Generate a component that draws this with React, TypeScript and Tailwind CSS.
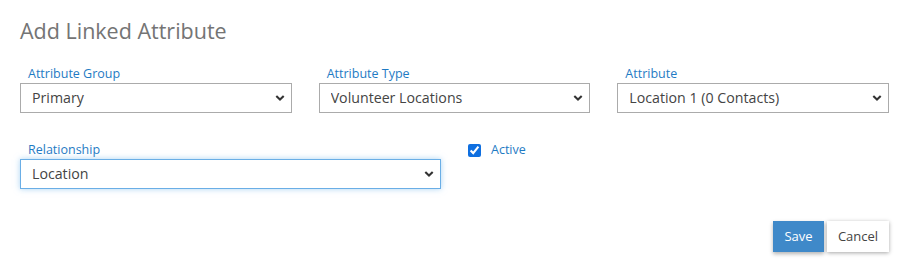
import { FC } from "react";

const font = { fontFamily: '"Open Sans", "Liberation Sans", sans-serif' };

const Chevron: FC = () => (
  <svg
    className="pointer-events-none absolute right-[7px] top-1/2 -translate-y-1/2"
    width="10"
    height="7"
    viewBox="0 0 10 7"
  >
    <path d="M1.3 1.6 L5 5 L8.7 1.6" fill="none" stroke="#333" strokeWidth="2.1" />
  </svg>
);

type FieldProps = {
  label: string;
  value: string;
  focused?: boolean;
};

const SelectField: FC<FieldProps> = ({ label, value, focused }) => (
  <div className="flex flex-col">
    <label className="mb-px pl-2 text-[12.5px] leading-4 text-[#1f7bc4]">
      {label}
    </label>
    <div className="relative">
      <select
        defaultValue={value}
        className={
          focused
            ? "h-[30px] w-full appearance-none border border-[#6aaee6] bg-white pl-[11px] text-[14.2px] text-[#444] shadow-[0_0_6px_rgba(102,175,233,0.55)] outline-none"
            : "h-[30px] w-full appearance-none border border-[#ababab] bg-white pl-[11px] text-[14.2px] text-[#444] outline-none"
        }
      >
        <option>{value}</option>
      </select>
      <Chevron />
    </div>
  </div>
);

export default function App() {
  return (
    <div
      className="h-[266px] w-[908px] bg-white pl-5 pr-[19px] pt-[17px]"
      style={font}
    >
      <h1 className="text-[21.5px] leading-7 text-[#747474]">
        Add Linked Attribute
      </h1>

      <div className="mt-[21px] grid grid-cols-3 gap-x-[27px]">
        <SelectField label="Attribute Group" value="Primary" />
        <SelectField label="Attribute Type" value="Volunteer Locations" />
        <SelectField label="Attribute" value="Location 1 (0 Contacts)" />
      </div>

      <div className="mt-[29px] grid grid-cols-2 gap-x-[27px]">
        <SelectField label="Relationship" value="Location" focused />
        <div className="flex h-4 items-center">
          <input
            type="checkbox"
            defaultChecked
            className="m-0 h-[13px] w-[13px] accent-[#0f6fe0]"
          />
          <span className="ml-[10px] text-[12.5px] leading-4 text-[#1f7bc4]">
            Active
          </span>
        </div>
      </div>

      <div className="mt-8 flex justify-end gap-[3px]">
        <button className="h-[31px] w-[51px] bg-[#3f89c9] text-[13px] text-white shadow-[0_2px_4px_rgba(0,0,0,0.3)]">
          Save
        </button>
        <button className="h-[31px] w-[62px] bg-white text-[13px] text-[#444] shadow-[0_1px_4px_rgba(0,0,0,0.35)]">
          Cancel
        </button>
      </div>
    </div>
  );
}
